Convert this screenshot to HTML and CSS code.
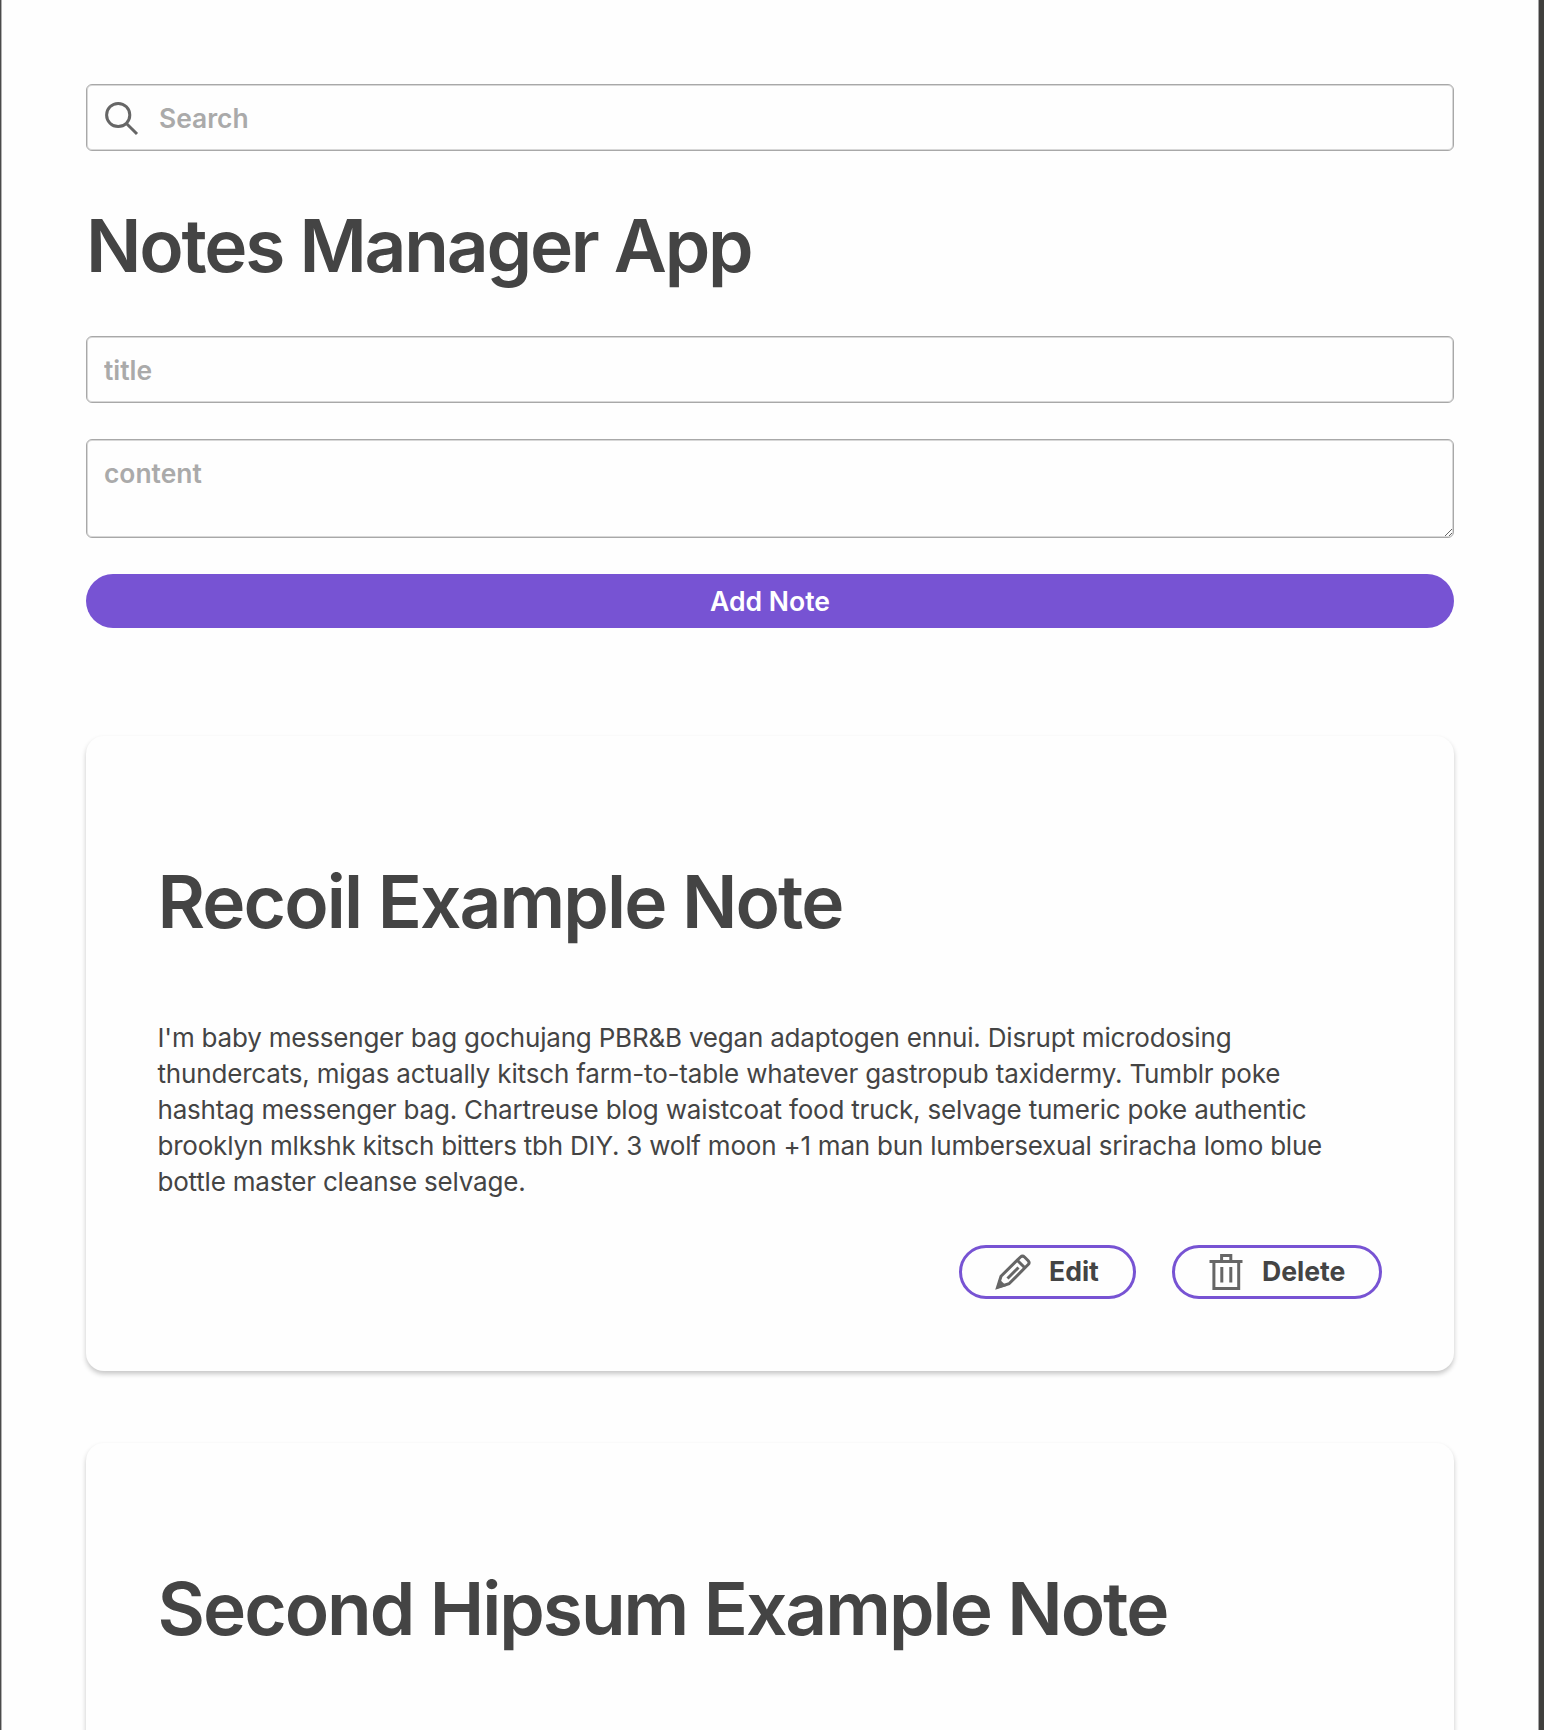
FILE: index.html
```html
<!DOCTYPE html>
<html lang="en">
<head>
<meta charset="utf-8">
<title>Notes Manager App</title>
<link rel="stylesheet" href="styles.css">
</head>
<body>
<main class="page">
  <label class="field search">
    <svg class="icon search-icon" viewBox="0 0 36 36"><circle cx="14.2" cy="14" r="11.6"/><path d="M22.2 22.2L33 33"/></svg>
    <input class="search-input" type="text" placeholder="Search">
  </label>
  <h1 class="heading app-title">Notes Manager App</h1>
  <form class="form">
    <input class="field title-input" type="text" placeholder="title">
    <textarea class="field content-input" placeholder="content"></textarea>
    <button class="add" type="button">Add Note</button>
  </form>
  <section class="notes">
    <article class="card">
      <h2 class="heading recoil">Recoil Example Note</h2>
      <p class="body"><span class="l1">I'm baby messenger bag gochujang PBR&amp;B vegan adaptogen ennui. Disrupt microdosing</span> <span class="l2">thundercats, migas actually kitsch farm-to-table whatever gastropub taxidermy. Tumblr poke</span> <span class="l3">hashtag messenger bag. Chartreuse blog waistcoat food truck, selvage tumeric poke authentic</span> <span class="l4">brooklyn mlkshk kitsch bitters tbh DIY. 3 wolf moon +1 man bun lumbersexual sriracha lomo blue</span> <span class="l5">bottle master cleanse selvage.</span></p>
      <div class="actions">
        <button class="pill edit" type="button"><svg class="icon" viewBox="0 0 36 36"><path d="M2.5 33.5L6 22.2L25.5 3Q27.5 1.2 29.5 3L33.2 6.7Q35 8.7 33.2 10.5L14 29.8Z"/><path d="M22.5 6.5L29.8 13.8M12.5 24.5L23.5 13.5"/><path class="solid" d="M1.5 34.8L4.2 25L11.5 32Z"/></svg><span>Edit</span></button>
        <button class="pill delete" type="button"><svg class="icon" viewBox="0 0 36 36"><path d="M1.5 7.5H34.5M5.9 7.5V34.5H30.7V7.5M13.6 7.5V1.6H22.8V7.5M13.8 13V28.5M22.8 13V28.5"/></svg><span>Delete</span></button>
      </div>
    </article>
    <article class="card">
      <h2 class="heading">Second Hipsum Example Note</h2>
    </article>
  </section>
</main>
</body>
</html>
```
FILE: styles.css
```css
* { box-sizing: border-box; }
html, body { height: 100%; }
body {
  margin: 0;
  overflow: hidden;
  background: #fefefe;
  color: #444;
  font-family: Inter, "Liberation Sans", sans-serif;
  font-size: 26px;
  font-weight: 400;
}
.page {
  height: 1730px;
  overflow: hidden;
  padding: 84px 85px 0;
  border-left: 1px solid #4b4b4b;
  border-right: 5px solid #403f3d;
  box-shadow: inset 1px 0 #b0b0b0, inset -1px 0 #a5a5a5;
}
button, input, textarea { font: inherit; color: inherit; }
.field {
  display: block;
  width: 100%;
  height: 67px;
  padding: 0 17px;
  border: 1px solid #a8a8a8;
  border-radius: 6px;
  background: #fefefe;
  box-shadow: inset 0 0 0 1px #d8d8d8;
  font-size: 26.4px;
  font-weight: 600;
  outline: none;
}
.search { display: flex; align-items: center; gap: 19px; }
.search-icon { position: relative; top: 1px; }
.search-input { flex: 1; border: 0; padding: 0; background: none; outline: none; }
::placeholder { color: #aaa; opacity: 1; }
.icon { width: 36px; height: 36px; fill: none; stroke: #666; stroke-width: 3; flex: none; }
.solid { fill: #666; stroke: none; }
.heading { margin: 0; font-size: 73px; line-height: 90px; font-weight: 600; letter-spacing: -2px; white-space: nowrap; }
.app-title { margin: 50px 0 45px; letter-spacing: -2.2px; }
.recoil { letter-spacing: -1.9px; }
.form { display: flex; flex-direction: column; gap: 36px; }
.content-input { height: 99px; padding-top: 15px; line-height: 36px; resize: vertical; }
.add { height: 54px; border: 0; border-radius: 27px; background: #7753d3; color: #fff; font-size: 26.6px; font-weight: 600; }
.notes { display: flex; flex-direction: column; gap: 72px; margin-top: 108px; }
.card {
  height: 634.5px;
  padding: 121.4px 72px 0 71.5px;
  border-radius: 18px;
  background: #fefefe;
  box-shadow: 0 3px 5px rgba(0, 0, 0, .22);
}
.body { margin: 72.6px 0 0; line-height: 36px; letter-spacing: -.2px; }
.body span { display: block; white-space: nowrap; }
.body .l2 { letter-spacing: -.175px; }
.body .l4 { letter-spacing: -.212px; }
.actions { display: flex; justify-content: flex-end; gap: 36px; margin-top: 45px; }
.pill {
  display: flex; align-items: center; gap: 18px;
  height: 54px; padding: 0 0 0 33px;
  border: 3px solid #7753d3; border-radius: 27px;
  background: #fefefe; font-size: 26.6px; font-weight: 700;
}
.pill span { padding-bottom: 2px; }
.edit { width: 177px; }
.delete { width: 210px; }
```
